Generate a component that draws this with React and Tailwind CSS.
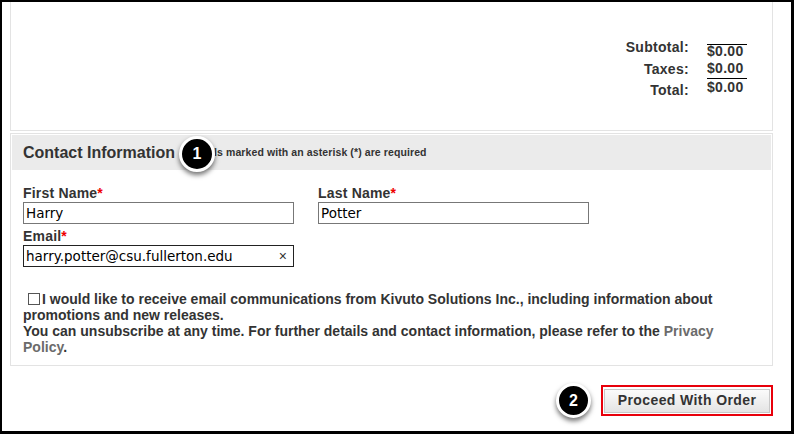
import React from 'react';

const Badge = ({ n, className = '' }) => (
  <div
    className={`flex items-center justify-center rounded-full bg-black border-[3px] border-white text-white font-bold text-[16px] shadow-[0_3px_5px_rgba(0,0,0,0.55)] ${className}`}
    style={{ fontFamily: '"Liberation Sans", Arial, sans-serif' }}
  >
    {n}
  </div>
);

const Field = ({ label, value, focused, clear, className = '' }) => (
  <div className={`flex flex-col ${className}`}>
    <label className="text-[14px] font-bold text-[#333] leading-[16px] tracking-[0.2px]">
      {label}
      <span className="text-[#e00]">*</span>
    </label>
    <div
      className={`mt-px h-[22px] w-[271px] flex items-center px-[2px] border ${
        focused ? 'border-[#222]' : 'border-[#777]'
      }`}
    >
      <span
        className="flex-1 text-[13.5px] text-black"
        style={{ fontFamily: '"DejaVu Sans", Verdana, sans-serif' }}
      >
        {value}
      </span>
      {clear && <span className="text-[14px] text-[#333] pr-[4px]">×</span>}
    </div>
  </div>
);

const TotalRow = ({ label, value, labelClass = '', valueClass = '' }) => (
  <div className="flex">
    <div className={`w-[80px] text-right ${labelClass}`}>{label}</div>
    <div className={`ml-[18px] w-[40px] ${valueClass}`}>{value}</div>
  </div>
);

export default function App() {
  return (
    <div
      className="w-[794px] h-[434px] bg-black pt-[2px] pl-[2px] pr-[3px] pb-[3px]"
      style={{ fontFamily: '"Liberation Sans", Arial, sans-serif' }}
    >
      <div className="w-full h-full bg-white flex flex-col pl-[8px] pr-[18px]">
        {/* Totals panel */}
        <div className="h-[129px] border-x border-b border-[#e3e3e3] flex justify-end pr-[25px] pt-[35px]">
          <div className="flex flex-col text-[14px] font-bold text-[#333] tracking-[0.3px] h-fit">
            <TotalRow
              label="Subtotal:"
              value="$0.00"
              labelClass="leading-[21px]"
              valueClass="mt-[7px] h-[14px] border-t border-black leading-[13px]"
            />
            <TotalRow
              label="Taxes:"
              value="$0.00"
              labelClass="leading-[22px]"
              valueClass="h-[21px] leading-[20px] border-b border-black"
            />
            <TotalRow label="Total:" value="$0.00" labelClass="leading-[20px]" valueClass="leading-[14px]" />
          </div>
        </div>

        {/* Contact panel */}
        <div className="mt-[2px] h-[233px] border border-[#e3e3e3] p-px flex flex-col">
          <div className="h-[35px] bg-[#ebebeb] flex items-center pl-[11px]">
            <span className="text-[16px] font-bold text-[#333]">Contact Information</span>
            <Badge n="1" className="w-[36px] h-[36px] ml-[4px] mt-[3px] relative z-10" />
            <span className="text-[10.5px] font-bold text-[#333] -ml-px tracking-[0.1px]">
              ls marked with an asterisk (*) are required
            </span>
          </div>

          <div className="pl-[11px] pt-[15px] flex flex-col">
            <div className="flex gap-[24px]">
              <Field label="First Name" value="Harry" />
              <Field label="Last Name" value="Potter" />
            </div>
            <Field label="Email" value="harry.potter@csu.fullerton.edu" focused clear className="mt-[4px]" />

            <div className="mt-[24px] w-[712px] text-[14px] font-bold text-[#333] leading-[16px]">
              <span className="inline-block w-[12px] h-[12px] border border-[#555] align-[-1px] ml-[5px] mr-[2px]"></span>
              I would like to receive email communications from Kivuto Solutions Inc., including information about promotions and new releases.
              <br />
              You can unsubscribe at any time. For further details and contact information, please refer to the{' '}
              <span className="text-[#6b6b6b]">Privacy</span>{' '}
              <span className="text-[#6b6b6b]">Policy</span>.
            </div>
          </div>
        </div>

        {/* Proceed */}
        <div className="flex justify-end items-center mt-[17px]">
          <Badge n="2" className="w-[35px] h-[35px] mr-[10px]" />
          <div className="border-2 border-[#e8000b] p-px">
            <button className="w-[166px] h-[24px] bg-gradient-to-b from-[#fbfbfb] to-[#e4e4e4] border border-[#c8c8c8] text-[14px] font-bold text-[#333] tracking-[0.4px]">
              Proceed With Order
            </button>
          </div>
        </div>
      </div>
    </div>
  );
}
